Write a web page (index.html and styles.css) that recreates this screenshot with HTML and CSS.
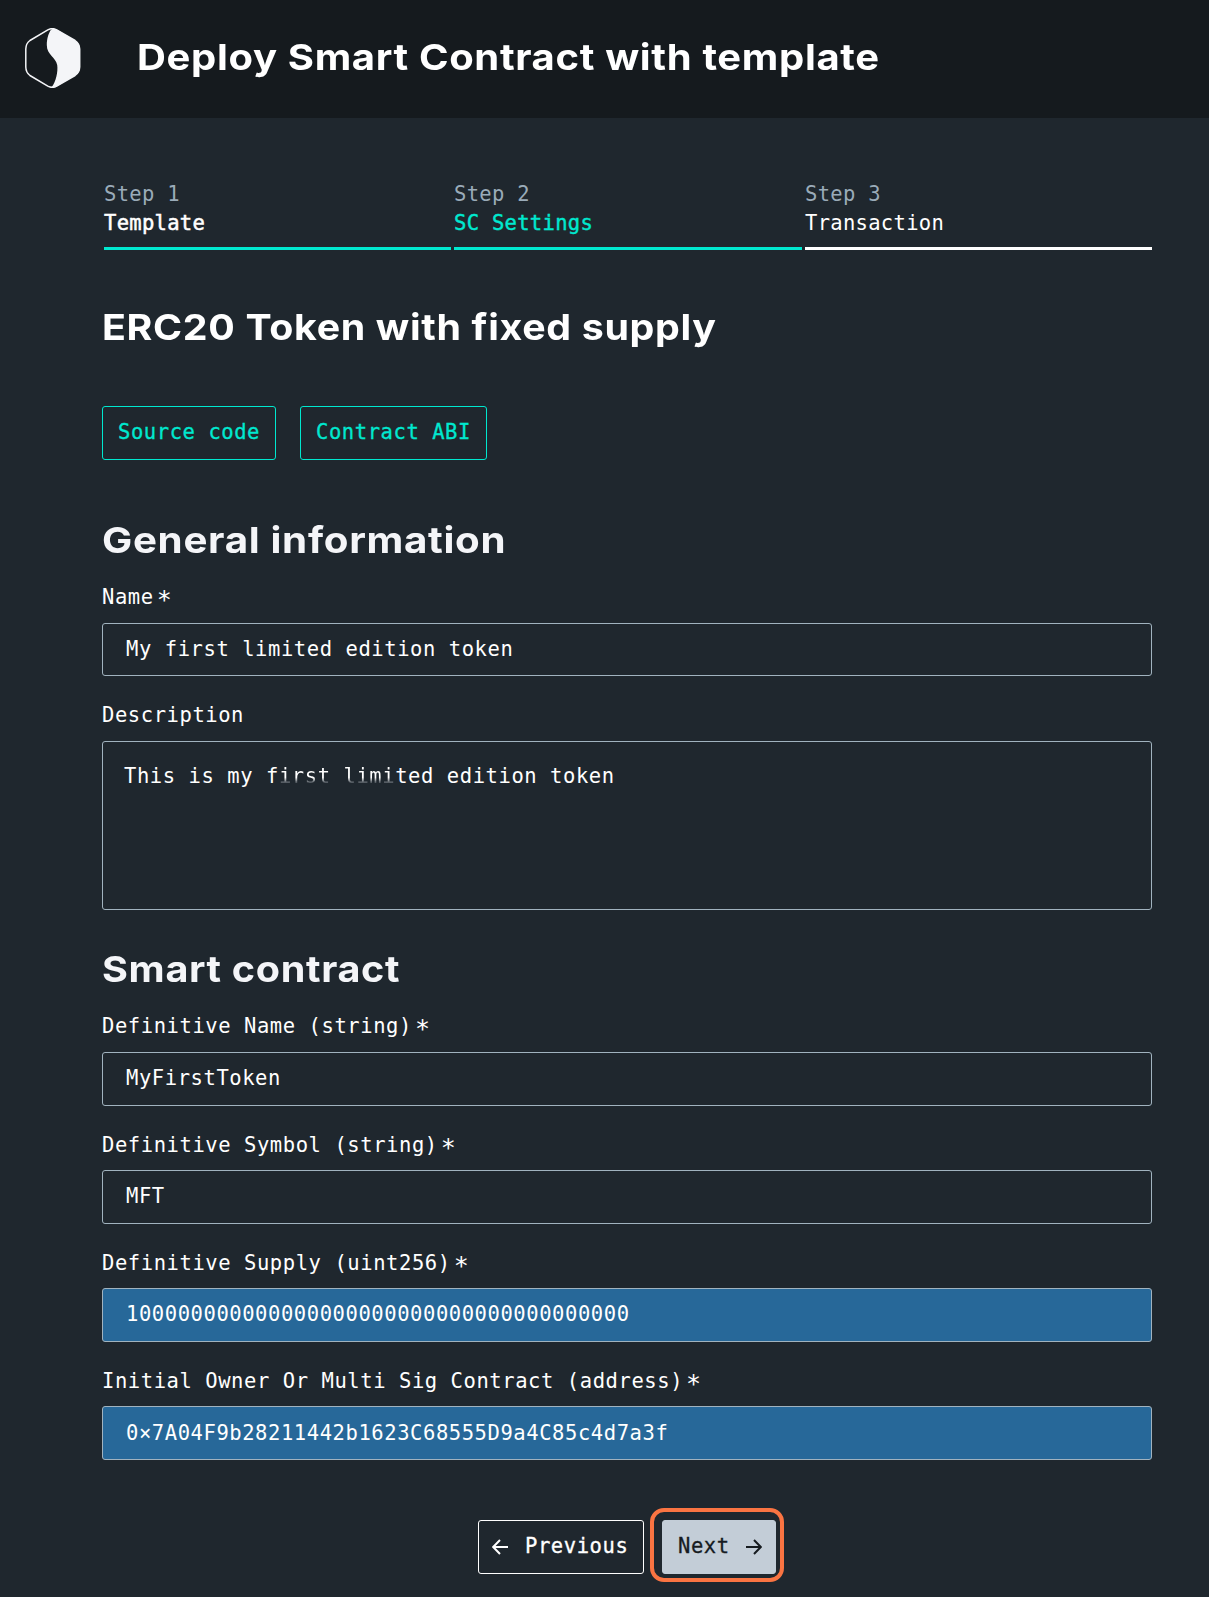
FILE: index.html
```html
<!DOCTYPE html>
<html lang="en">
<head>
<meta charset="utf-8">
<title>Deploy Smart Contract with template</title>
<link rel="stylesheet" href="styles.css">
</head>
<body>
<header class="header">
  <svg class="logo" viewBox="0 0 56 60" width="55.500" height="60" preserveAspectRatio="none">
    <path d="M23 1.8 Q27.500 -.5 32 1.800 L50.500 12.500 Q55 15.500 55.200 21 V39 Q55 44.500 50.500 47.500 L32 58.200 Q27.500 60.500 23 58.200 L5 47.500 Q.9 44.500 .8 39 V21 Q.9 15.500 5 12.500 Z" fill="none" stroke="#f4f5f8" stroke-width="1.500"/>
    <path d="M26 2 Q29 0 32 1.500 L50.500 12.500 Q55.500 15.500 55.500 21 V39 Q55.500 44.500 50.500 47.500 L32 58.500 Q30 60 27 59 C31 54 33.500 44 32.500 37 C31 29 22 27 22 17 C22 10 24 5 26 2 Z" fill="#f4f5f8"/>
  </svg>
  <h1 class="title">Deploy Smart Contract with template</h1>
</header>
<main class="main">
  <nav class="steps">
    <div class="step done"><span class="step-no">Step 1</span><span class="step-name">Template</span></div>
    <div class="step current"><span class="step-no">Step 2</span><span class="step-name">SC Settings</span></div>
    <div class="step"><span class="step-no">Step 3</span><span class="step-name">Transaction</span></div>
  </nav>
  <h2 class="heading template-name">ERC20 Token with fixed supply</h2>
  <div class="links">
    <a class="btn btn-source">Source code</a>
    <a class="btn btn-abi">Contract ABI</a>
  </div>
  <section class="section">
    <h2 class="heading general">General information</h2>
    <div class="label">Name<span class="req">*</span></div>
    <div class="field name-field">My first limited edition token</div>
    <div class="label">Description</div>
    <div class="field area">This is my f<span class="fade">irst limi</span>ted edition token</div>
  </section>
  <section class="section contract">
    <h2 class="heading smart">Smart contract</h2>
    <div class="label">Definitive Name (string)<span class="req">*</span></div>
    <div class="field">MyFirstToken</div>
    <div class="label">Definitive Symbol (string)<span class="req">*</span></div>
    <div class="field">MFT</div>
    <div class="label">Definitive Supply (uint256)<span class="req">*</span></div>
    <div class="field filled">100000000000000000000000000000000000000</div>
    <div class="label">Initial Owner Or Multi Sig Contract (address)<span class="req">*</span></div>
    <div class="field filled address">0×7A04F9b28211442b1623C68555D9a4C85c4d7a3f</div>
  </section>
  <div class="actions">
    <a class="btn previous">
      <svg width="16" height="16" viewBox="0 0 16 16"><path d="M8 1 L1.200 8 L8 15 M1.200 8 H16" fill="none" stroke="currentColor" stroke-width="2"/></svg>
      <span>Previous</span>
    </a>
    <div class="next-ring">
      <a class="btn next">
        <span>Next</span>
        <svg width="16" height="16" viewBox="0 0 16 16"><path d="M8 1 L14.800 8 L8 15 M14.800 8 H0" fill="none" stroke="currentColor" stroke-width="2"/></svg>
      </a>
    </div>
  </div>
</main>
</body>
</html>
```
FILE: styles.css
```css
* { box-sizing: border-box; }
body {
  margin: 0;
  background: #1f272e;
  color: #fff;
  font-family: "DejaVu Sans Mono", monospace;
  font-size: 20.5px;
  line-height: 29px;
  letter-spacing: .57px;
  white-space: nowrap;
}
.header {
  height: 118px;
  background: #151a1e;
  display: flex;
  align-items: flex-start;
  padding: 28px 0 0 25px;
}
.logo { flex: none; }
.title, .heading {
  width: fit-content;
  margin: 0;
  font-family: Inter, sans-serif;
  font-weight: 650;
  font-size: 36px;
  line-height: 44px;
  letter-spacing: .6px;
  transform-origin: 0 0;
}
.title { margin: 7px 0 0 56px; transform: scaleX(1.111); }
.main { padding: 62px 57px 0 102px; }
.steps {
  display: grid;
  grid-template-columns: 347px 348px 347px;
  gap: 3px;
  padding-left: 2px;
  letter-spacing: .3px;
}
.step {
  display: flex;
  flex-direction: column;
  height: 70px;
  border-bottom: 3px solid #fff;
}
.step-no { color: #9aabb9; }
.done, .current { border-color: #00e8cf; }
.done .step-name { -webkit-text-stroke: .5px; }
.current .step-name { color: #00e8cf; -webkit-text-stroke: .4px; }
.template-name { margin-top: 55px; transform: scaleX(1.093); }
.links { display: flex; gap: 24px; margin-top: 57px; }
.btn {
  height: 54px;
  border: 1px solid #00e8cf;
  border-radius: 3px;
  color: #00e8cf;
  display: flex;
  align-items: center;
  padding: 0 0 2px 15px;
  -webkit-text-stroke: .3px;
}
.btn-source { width: 174px; }
.btn-abi { width: 187px; }
.general { margin-top: 58px; color: #f4f5f8; transform: scaleX(1.12); }
.smart { margin-top: 37px; color: #f4f5f8; transform: scaleX(1.1); }
.label { height: 29px; margin: 25px 0 11px; }
.contract .label { margin: 25px 0 10px; }
.heading + .label, .contract .heading + .label { margin: 21px 0 11px; }
.req {
  margin-left: 3px;
  font-size: 25px;
  line-height: 20px;
  position: relative;
  top: 4px;
}
.field {
  height: 54px;
  border: 1px solid #a1b3bf;
  border-radius: 3px;
  padding: 11px 0 0 23px;
}
.name-field { height: 53px; }
.area { height: 169px; padding: 20px 0 0 21px; }
.address { padding-top: 12px; }
.fade {
  background: linear-gradient(#fff 56%, #555c63 76%);
  -webkit-background-clip: text;
  color: transparent;
}
.filled { background: #276899; }
.actions { display: flex; margin: 48px 0 0 376px; gap: 6px; }
.previous {
  width: 166px;
  margin-top: 12px;
  border-color: #fff;
  color: #fff;
  padding-left: 13px;
  gap: 17px;
}
.next-ring {
  width: 134px;
  height: 74px;
  border: 4px solid #fa7442;
  border-radius: 14px;
  padding: 8px;
}
.next {
  width: 114px;
  background: #c3cdd7;
  border-color: #c3cdd7;
  color: #161b1f;
  gap: 16px;
}
.btn svg { position: relative; top: 1px; flex: none; }
```
